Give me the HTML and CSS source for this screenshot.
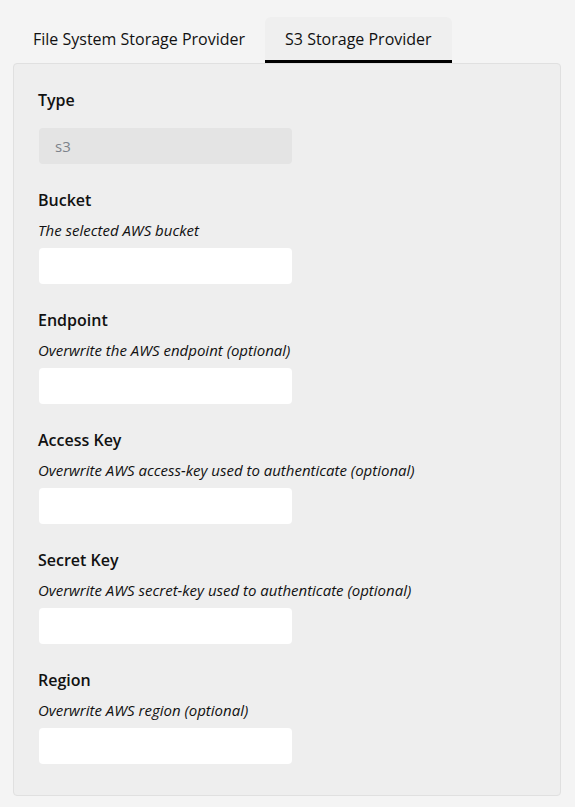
FILE: index.html
```html
<!DOCTYPE html>
<html>
<head>
<meta charset="utf-8">
<link rel="stylesheet" href="styles.css">
</head>
<body>
<div class="page">
  <div class="tabs">
    <div class="tab">File System Storage Provider</div>
    <div class="tab active">S3 Storage Provider</div>
  </div>
  <div class="panel">
    <div class="field">
      <div class="label label-tight">Type</div>
      <div class="input disabled">s3</div>
    </div>
    <div class="field">
      <div class="label">Bucket</div>
      <div class="desc">The selected AWS bucket</div>
      <div class="input"></div>
    </div>
    <div class="field">
      <div class="label">Endpoint</div>
      <div class="desc">Overwrite the AWS endpoint (optional)</div>
      <div class="input"></div>
    </div>
    <div class="field">
      <div class="label">Access Key</div>
      <div class="desc">Overwrite AWS access-key used to authenticate (optional)</div>
      <div class="input"></div>
    </div>
    <div class="field">
      <div class="label">Secret Key</div>
      <div class="desc">Overwrite AWS secret-key used to authenticate (optional)</div>
      <div class="input"></div>
    </div>
    <div class="field">
      <div class="label">Region</div>
      <div class="desc">Overwrite AWS region (optional)</div>
      <div class="input"></div>
    </div>
  </div>
</div>
</body>
</html>
```

FILE: styles.css
```css
html, body {
  margin: 0;
  padding: 0;
  background: #f4f4f4;
  font-family: "Open Sans", "Noto Sans", sans-serif;
  color: #111;
}
.page {
  padding: 17px 14px 10px 13px;
}
.tabs {
  display: flex;
}
.tab {
  font-size: 16px;
  line-height: 22px;
  padding: 11px 20px 10px;
  border-bottom: 3px solid transparent;
  border-radius: 6px 6px 0 0;
  color: #111;
}
.tab.active {
  background: #efefef;
  border-bottom-color: #000;
}
.panel {
  background: #eeeeee;
  border: 1px solid #e0e0e0;
  border-radius: 4px;
  padding: 25px 0 31px 24px;
}
.field {
  display: flex;
  flex-direction: column;
  align-items: flex-start;
  margin-bottom: 25px;
}
.field:last-child {
  margin-bottom: 0;
}
.label {
  font-size: 16px;
  line-height: 22px;
  font-weight: 600;
  color: #111;
  margin-bottom: 9px;
}
.label.label-tight {
  margin-bottom: 17px;
}
.desc {
  font-size: 15px;
  line-height: 20px;
  font-style: italic;
  color: #111;
  margin-bottom: 8px;
}
.input {
  width: 253px;
  height: 36px;
  margin-left: 1px;
  box-sizing: border-box;
  background: #fff;
  border-radius: 4px;
  padding: 0 16px;
  font-size: 15px;
  line-height: 36px;
}
.input.disabled {
  background: #e4e4e4;
  color: #7d828a;
}
```
